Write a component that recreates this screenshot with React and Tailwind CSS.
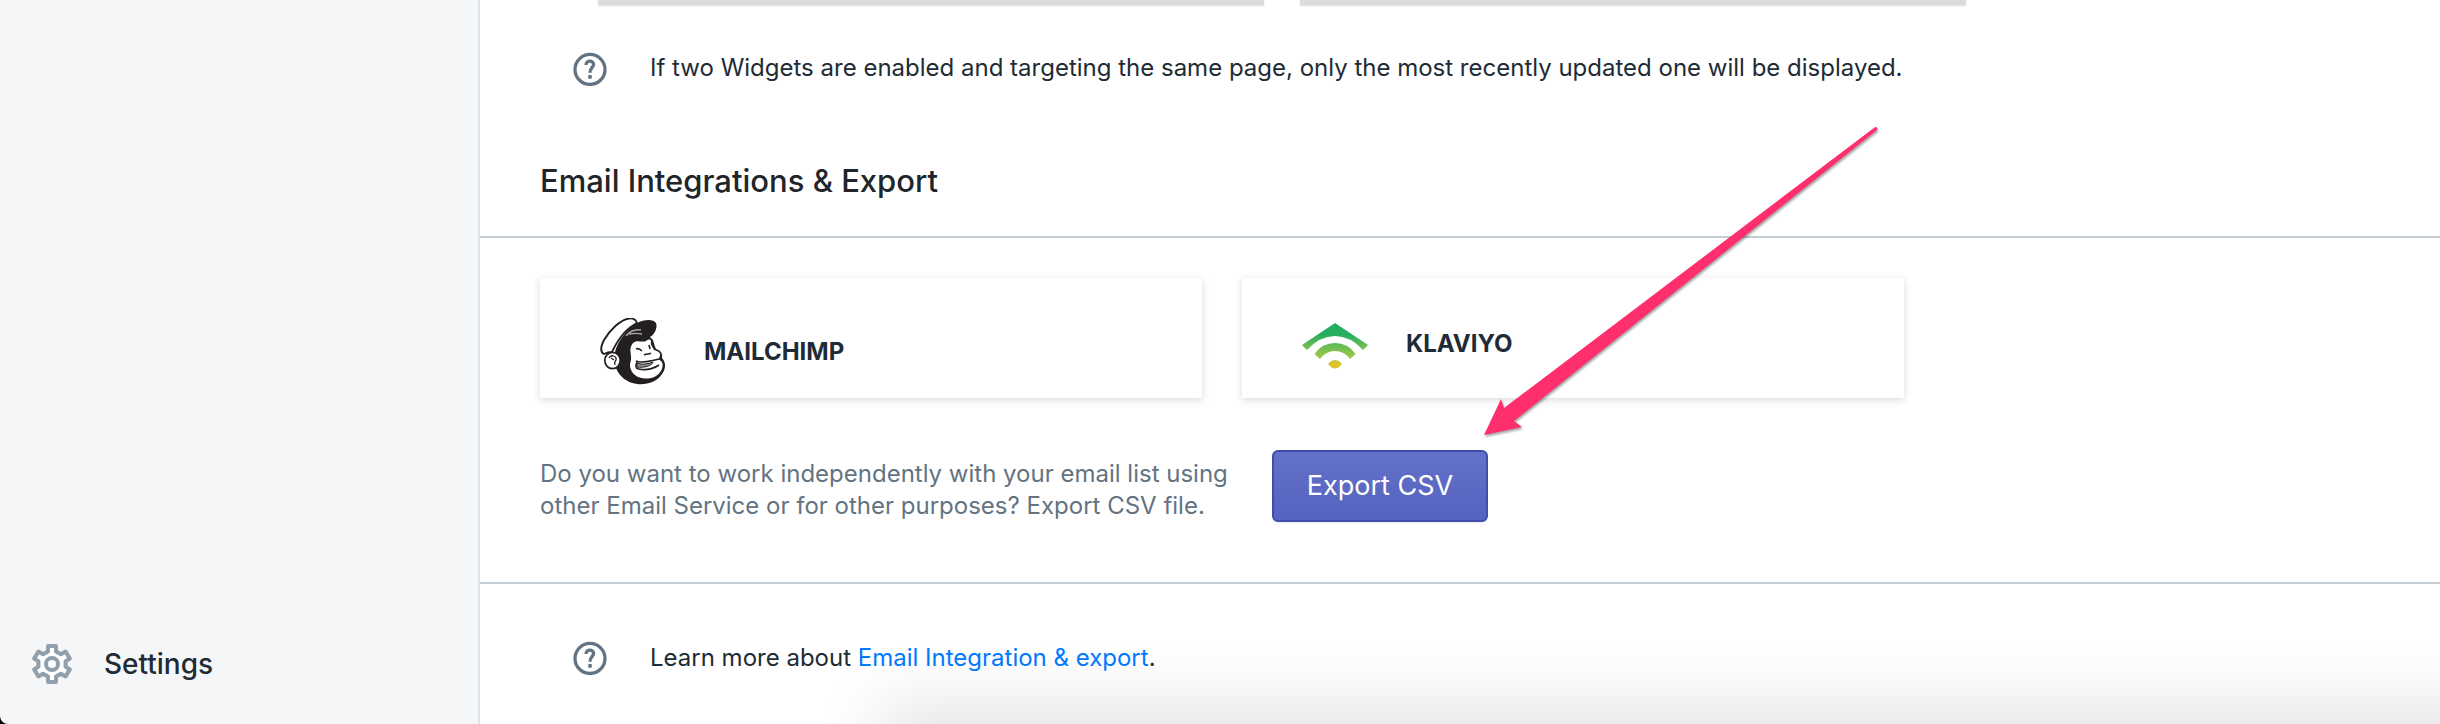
const HelpIcon = () => (
  <svg
    viewBox="0 0 34 34"
    className="h-[34px] w-[34px] shrink-0"
    fill="none"
    stroke="#637381"
    strokeWidth="3.3"
    aria-hidden="true"
  >
    <circle cx="17" cy="17.4" r="15" />
    <path d="M13.1 13 V12.6 C13.1 7.9 20.6 8 20.6 12.6 C20.6 15.6 17 15.6 17 20.8" />
    <rect x="15.2" y="23" width="3.6" height="3.8" rx="0.8" fill="#637381" stroke="none" />
  </svg>
);

const GearIcon = () => (
  <svg
    viewBox="0 0 40 40"
    className="h-10 w-10 shrink-0"
    fill="white"
    stroke="#919eab"
    strokeWidth="4"
    strokeLinejoin="round"
    aria-hidden="true"
  >
    <path d="M16 2 H24 V7.4 L29 10.2 L33.6 7.6 L37.8 14.6 L33.6 17.2 V22.8 L37.8 25.4 L33.6 32.4 L29 29.8 L24 32.6 V38 H16 V32.6 L11 29.8 L6.4 32.4 L2.2 25.4 L6.4 22.8 V17.2 L2.2 14.6 L6.4 7.6 L11 10.2 L16 7.4 Z" />
    <circle cx="20" cy="20" r="6" />
  </svg>
);

const MailchimpLogo = () => (
  <svg viewBox="0 1 66 68" className="h-[68px] w-[66px] shrink-0" aria-hidden="true">
    {/* head and cap visor */}
    <path
      fill="#231f20"
      d="M15 35 C17 26 26 12 37 6 C44 2 54 2 56 6 C58 11 54 18 50 20 L53 23 C54 27 55 30 56 32 C60 33 63 36 62 41 C66 45 66 52 62 57 C57 65 47 68 37 67 C27 66 19 59 16 51 Z"
    />
    {/* cap crown */}
    <path
      fill="white"
      stroke="#231f20"
      strokeWidth="1.9"
      d="M4 37 C0 35 1 29 4 23 C10 13 20 3 29 1.5 C33 1 36 3 37 6 C27 11 18 22 12 35 C9 35 6 36 4 37 Z"
    />
    <path
      fill="none"
      stroke="#aaa"
      strokeWidth="1.3"
      d="M26 19 C30 14 35 12 41 13 M29 17 C34 16 38 16 42 17"
    />
    {/* face */}
    <path
      fill="white"
      d="M33 26 C37 22 42 26 46 24 C49 22 51 22 51 25 C50 28 53 30 54 33 C58 34 61 36 60 39 C58 42 60 43 62 45 C64 50 61 56 56 59 C49 63 39 62 35 58 C30 54 29 48 31 43 C32 38 28 32 33 26 Z"
    />
    {/* ear */}
    <ellipse
      cx="12.5"
      cy="43.5"
      rx="7.7"
      ry="8.2"
      fill="white"
      stroke="#231f20"
      strokeWidth="1.7"
    />
    <path
      fill="none"
      stroke="#231f20"
      strokeWidth="1.3"
      d="M9 41 C11 37 17 39 16 43 C15 45 14 45 15 48 M11 41 L14 43"
    />
    {/* eyes, nose and mouth */}
    <path
      fill="none"
      stroke="#231f20"
      strokeWidth="1.6"
      d="M36 32 C38 31 40 32 42 34 M49 28 L50 32 M44 38 C47 36 49 38 51 36 M36 44 C43 47 52 43 60 42 M37 45 C35 49 36 52 39 52 C47 54 55 51 59 48"
    />
    <path
      fill="#8f8d8e"
      stroke="#231f20"
      strokeWidth="1"
      d="M37 46 C42 48 48 47 53 45 C52 49 44 51 37 50 Z"
    />
  </svg>
);

const KlaviyoLogo = () => (
  <svg viewBox="0 -4 66 50" className="h-[50px] w-[66px] shrink-0" aria-hidden="true">
    <defs>
      <linearGradient id="klaviyo" x1="0" y1="0" x2="0" y2="46" gradientUnits="userSpaceOnUse">
        <stop offset="0.25" stopColor="#23ae60" />
        <stop offset="0.5" stopColor="#6abd55" />
        <stop offset="0.75" stopColor="#9cc846" />
        <stop offset="0.86" stopColor="#d8c52c" />
        <stop offset="1" stopColor="#e3bd2d" />
      </linearGradient>
    </defs>
    <g fill="url(#klaviyo)">
      <path d="M33 0 L66 22 L61 27 Q48 13 33 13 Q18 13 5 27 L0 22 Z" />
      <path d="M12.5 31 Q20 20 33 20 Q46 20 53.5 31 L48 36 Q42 28 33 28 Q24 28 18 36 Z" />
      <path d="M26 41 Q33 33 40 41 Q33 50 26 41 Z" />
    </g>
  </svg>
);

const IntegrationCard = ({ logo, name, className }) => (
  <a
    href="#"
    className={`flex w-full max-w-[662px] items-center bg-white px-[60px] pb-3 shadow-[0_2px_8px_rgba(0,0,0,0.15)] ${className}`}
  >
    {logo}
    <span className="ml-[38px] text-2xl font-bold text-[#212b36]">{name}</span>
  </a>
);

const App = () => {
  return (
    <div className="relative flex min-h-screen overflow-hidden bg-black font-['Inter',sans-serif] text-2xl text-[#212b36]">
      <nav className="flex w-[480px] shrink-0 flex-col justify-end rounded-bl-lg border-r-2 border-[#dfe3e8] bg-[#f4f6f8] px-8 pb-10">
        <a href="#" className="flex items-center gap-8 text-[28px] leading-10 font-medium">
          <GearIcon />
          Settings
        </a>
      </nav>

      <main className="min-w-0 flex-1 bg-white">
        {/* bottom edge of the widget cards */}
        <div className="flex h-[5px] gap-9 pl-[118px]">
          <div className="w-full max-w-[666px] bg-[#dcdcdc] shadow-[0_1px_2px_#dcdcdc]"></div>
          <div className="w-full max-w-[666px] bg-[#dcdcdc] shadow-[0_1px_2px_#dcdcdc]"></div>
        </div>

        <div className="mt-[47px] flex gap-[43px] pl-[93px] leading-8">
          <HelpIcon />
          <p>
            If two Widgets are enabled and targeting the same page, only the
            most recently updated one will be displayed.
          </p>
        </div>

        <h2 className="mt-[75px] border-b-2 border-[#c4cdd5] pb-[35px] pl-[60px] text-[31px] leading-10 font-medium text-[#212529]">
          Email Integrations &amp; Export
        </h2>

        <section className="border-b-2 border-[#c4cdd5] pt-10 pb-[60px] pl-[60px]">
          <div className="flex gap-10">
            <IntegrationCard
              logo={<MailchimpLogo />}
              name="MAILCHIMP"
              className="pt-10"
            />
            <IntegrationCard
              logo={<KlaviyoLogo />}
              name="KLAVIYO"
              className="pt-6"
            />
          </div>
          <div className="mt-[52px] flex items-center gap-8">
            <p className="w-[700px] pt-2 leading-8 text-[#637381]">
              Do you want to work independently with your email list using other
              Email Service or for other purposes? Export CSV file.
            </p>
            <button
              type="button"
              className="h-[72px] w-[216px] rounded-md border-2 border-[#3f4eae] bg-linear-to-b from-[#6371c7] to-[#5563c1] text-[27px] text-white shadow-[0_2px_0_rgba(22,29,37,0.05)]"
            >
              Export CSV
            </button>
          </div>
        </section>

        <div className="mt-[57px] flex items-center gap-[43px] pl-[93px] leading-8">
          <HelpIcon />
          <p>
            Learn more about{' '}
            <a href="#" className="text-[#007bff]">
              Email Integration &amp; export
            </a>
            .
          </p>
        </div>
      </main>

      {/* pointer to the export button */}
      <svg
        viewBox="0 0 400 320"
        className="pointer-events-none absolute top-[120px] left-[1480px] h-80 w-[400px] drop-shadow-[1px_2px_1px_rgba(0,0,0,0.35)]"
        aria-hidden="true"
      >
        <path
          fill="#ff2e6c"
          d="M4 315 L21 279 L24 288 L394.5 7.5 Q398 6 397 10 L34 301 L42 307 Z"
        />
      </svg>

      {/* soft shade cast by the panel below */}
      <div className="pointer-events-none absolute top-full -right-20 left-[900px] h-20 shadow-[0_0_70px_20px_rgba(0,0,0,0.11)]"></div>
    </div>
  );
};

export default App;
